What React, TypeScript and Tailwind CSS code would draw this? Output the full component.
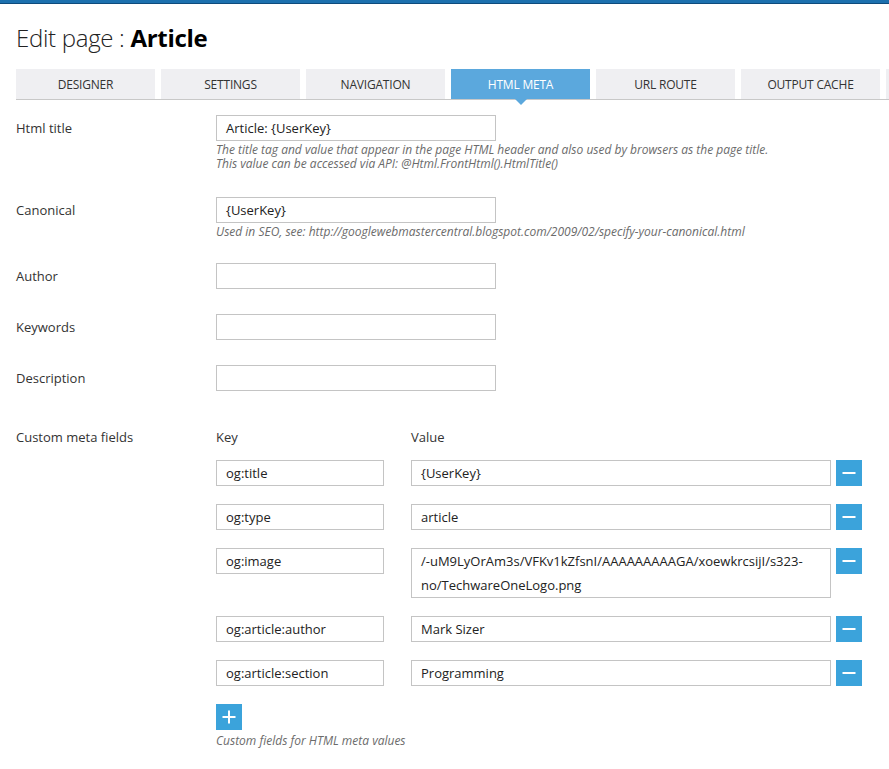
import React from "react";

const TABS = ["Designer", "Settings", "Navigation", "Html Meta", "Url Route", "Output Cache", "Security"];

const META_ROWS = [
  { key: "og:title", value: "{UserKey}" },
  { key: "og:type", value: "article" },
  {
    key: "og:image",
    value: "/-uM9LyOrAm3s/VFKv1kZfsnI/AAAAAAAAAGA/xoewkrcsijI/s323-no/TechwareOneLogo.png",
    tall: true,
  },
  { key: "og:article:author", value: "Mark Sizer" },
  { key: "og:article:section", value: "Programming" },
];

function TextBox({ value, className = "" }: { value?: string; className?: string }) {
  return (
    <div
      className={`h-[26px] border border-[#c4c4c4] bg-white pl-[9px] pr-2 text-[13px] leading-[24px] text-[#222] whitespace-nowrap overflow-hidden ${className}`}
    >
      {value}
    </div>
  );
}

function Help({ children }: { children: React.ReactNode }) {
  return <div className="text-[12px] italic leading-[14px] text-[#6b6b6b] mt-[2px]">{children}</div>;
}

function Field({
  label,
  value,
  help,
  className = "",
}: {
  label: string;
  value?: string;
  help?: React.ReactNode;
  className?: string;
}) {
  return (
    <div className={`flex ${className}`}>
      <div className="w-[200px] shrink-0 leading-[26px]">{label}</div>
      <div>
        <TextBox value={value} className="w-[280px]" />
        {help && <Help>{help}</Help>}
      </div>
    </div>
  );
}

function SquareButton({ kind }: { kind: "minus" | "plus" }) {
  return (
    <button className="w-[26px] h-[26px] shrink-0 bg-[#3ba3db] flex items-center justify-center">
      <svg width="16" height="16" viewBox="0 0 16 16">
        <rect x="1.5" y="7" width="13" height="2" fill="#fff" />
        {kind === "plus" && <rect x="7" y="1.5" width="2" height="13" fill="#fff" />}
      </svg>
    </button>
  );
}

export default function App() {
  return (
    <div
      className="w-[889px] h-[769px] overflow-hidden bg-white text-[13px] text-[#333]"
      style={{ fontFamily: '"Open Sans", "Noto Sans", sans-serif' }}
    >
      <div className="h-[4px] bg-[#1c70ae] border-b border-[#0e4b7c]" />

      <div className="pl-4">
        <h1 className="mt-[19px] text-[24px] leading-[30px] text-[#222] font-light tracking-[-0.3px]">
          Edit page : <span className="font-bold text-black">Article</span>
        </h1>

        {/* Tabs */}
        <div className="mt-[16px] flex gap-[6px] border-b border-[#c8c8c8] w-[900px]">
          {TABS.map((t, i) => {
            const active = i === 3;
            return (
              <div
                key={t}
                className={`relative w-[139px] shrink-0 h-[30px] pt-[1px] flex items-center justify-center uppercase text-[12px] tracking-[-0.2px] ${
                  active ? "bg-[#5ba8dd] text-white" : "bg-[#efeff2] text-[#333]"
                }`}
              >
                {i < 6 ? t : ""}
                {active && (
                  <span className="absolute left-1/2 -translate-x-1/2 top-[30px] w-0 h-0 border-l-[6px] border-r-[6px] border-t-[6px] border-l-transparent border-r-transparent border-t-[#5ba8dd]" />
                )}
              </div>
            );
          })}
        </div>

        <Field
          className="mt-[15px]"
          label="Html title"
          value="Article: {UserKey}"
          help={
            <>
              The title tag and value that appear in the page HTML header and also used by browsers as the page title.
              <br />
              This value can be accessed via API: @Html.FrontHtml().HtmlTitle()
            </>
          }
        />
        <Field
          className="mt-[26px]"
          label="Canonical"
          value="{UserKey}"
          help="Used in SEO, see: http://googlewebmastercentral.blogspot.com/2009/02/specify-your-canonical.html"
        />
        <Field className="mt-[24px]" label="Author" />
        <Field className="mt-[25px]" label="Keywords" />
        <Field className="mt-[25px]" label="Description" />

        {/* Custom meta fields */}
        <div className="flex mt-[36px]">
          <div className="w-[200px] shrink-0 leading-[20px]">Custom meta fields</div>
          <div>
            <div className="flex leading-[20px]">
              <div className="w-[195px]">Key</div>
              <div>Value</div>
            </div>
            <div className="mt-[13px] flex flex-col gap-[18px]">
              {META_ROWS.map((r) => (
                <div key={r.key} className="flex items-start">
                  <TextBox value={r.key} className="w-[168px]" />
                  <div className="w-[27px]" />
                  {r.tall ? (
                    <div className="w-[420px] h-[50px] border border-[#c4c4c4] bg-white pl-[9px] pr-2 text-[13px] leading-[24px] text-[#222]">
                      {r.value}
                    </div>
                  ) : (
                    <TextBox value={r.value} className="w-[420px]" />
                  )}
                  <div className="w-[5px]" />
                  <SquareButton kind="minus" />
                </div>
              ))}
            </div>
            <div className="mt-[18px]">
              <SquareButton kind="plus" />
            </div>
            <Help>
              <span className="block mt-[4px]">Custom fields for HTML meta values</span>
            </Help>
          </div>
        </div>
      </div>
    </div>
  );
}
